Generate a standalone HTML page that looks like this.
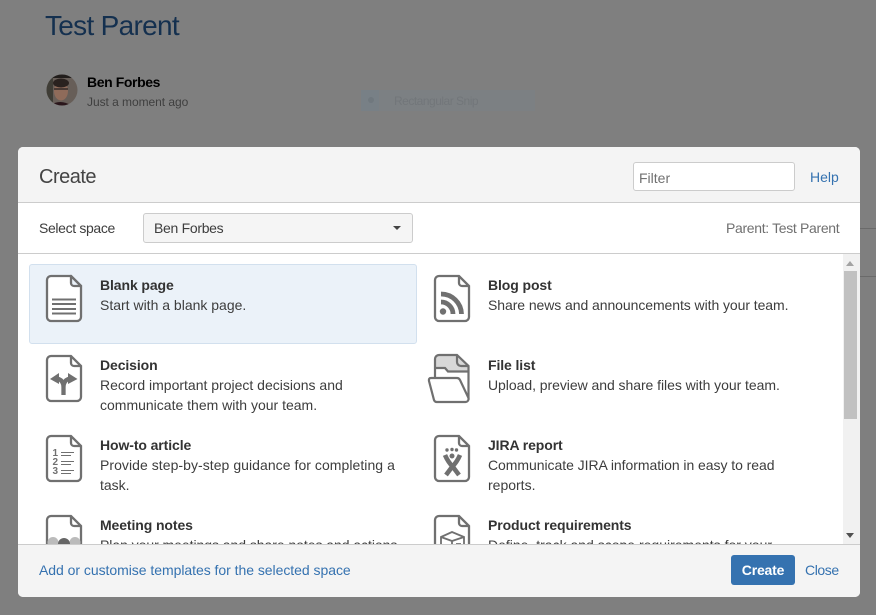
<!DOCTYPE html>
<html><head><meta charset="utf-8">
<style>
html,body{margin:0;padding:0;width:876px;height:615px;overflow:hidden;background:#7f7f7f;font-family:"Liberation Sans",sans-serif;}
div,span,a{position:absolute;white-space:nowrap;}
.t{font-size:14px;line-height:20px;color:#3d3d3d;}
.b{font-weight:bold;font-size:14px;line-height:20px;color:#333;letter-spacing:-0.1px;}
.l{color:#3572b0;font-size:14px;line-height:20px;}
svg{position:absolute;overflow:visible;}
</style></head><body>
<div style="left:45px;top:8px;font-size:28px;line-height:36px;color:#14304f;letter-spacing:-0.7px;">Test Parent</div>
<svg style="left:46px;top:74px" width="32" height="32" viewBox="0 0 32 32"><defs><clipPath id="c"><circle cx="16" cy="16" r="15.500"/></clipPath></defs><g clip-path="url(#c)"><rect width="32" height="32" fill="#675e58"/><rect width="32" height="4" fill="#221e1c"/><path d="M0 0H7V32H0Z" fill="#3f3d36"/><ellipse cx="15" cy="17" rx="7" ry="9.500" fill="#8f6b5a"/><ellipse cx="15" cy="9" rx="8" ry="4.500" fill="#2a221f"/><path d="M8 14H22V16H8Z" fill="#4a3a34"/><path d="M3 32Q14 24 26 32Z" fill="#2a161b"/></g></svg>
<div style="left:87px;top:72px;font-size:14px;line-height:20px;font-weight:bold;color:#000;letter-spacing:-0.4px;">Ben Forbes</div>
<div style="left:87px;top:92px;font-size:12px;line-height:20px;color:#3f3f3f;letter-spacing:-0.05px;">Just a moment ago</div>
<div style="left:361px;top:90px;width:174px;height:21px;background:#7c8083;"></div>
<div style="left:361px;top:90px;width:18px;height:21px;background:#788086;"></div>
<div style="left:368px;top:97px;width:6px;height:6px;border-radius:3px;background:#70787e;"></div>
<div style="left:394px;top:91px;font-size:12px;line-height:20px;color:#72767a;letter-spacing:-0.5px;">Rectangular Snip</div>
<div style="left:860px;top:228px;width:16px;height:1px;background:#6a6a6a;"></div>
<div style="left:860px;top:276px;width:16px;height:1px;background:#6a6a6a;"></div>

<div style="left:18px;top:147px;width:842px;height:450px;background:#fff;border-radius:5px;overflow:hidden;">
  <div style="left:0;top:0;width:842px;height:55px;background:#f4f4f4;border-bottom:1px solid #ccc;"></div>
  <div style="left:21px;top:16px;font-size:20px;line-height:28px;color:#444;letter-spacing:-0.5px;">Create</div>
  <div style="left:615px;top:15px;width:160px;height:27px;background:#fff;border:1px solid #ccc;border-radius:3px;"></div>
  <div style="left:621px;top:21px;font-size:14px;line-height:20px;color:#707070;">Filter</div>
  <div class="l" style="left:792px;top:20px;">Help</div>
  <div class="t" style="left:21px;top:71px;letter-spacing:-0.35px;">Select space</div>
  <div style="left:125px;top:66px;width:268px;height:28px;background:#f5f5f5;border:1px solid #ccc;border-radius:3px;"></div>
  <div class="t" style="left:136px;top:71px;letter-spacing:-0.3px;">Ben Forbes</div>
  <svg style="left:375px;top:79px" width="9" height="5"><path d="M0 0H8L4 4Z" fill="#444"/></svg>
  <div style="left:708px;top:71px;font-size:14px;line-height:20px;color:#707070;letter-spacing:-0.33px;">Parent: Test Parent</div>
  <div style="left:0;top:106px;width:842px;height:1px;background:#ccc;"></div>

  <div style="left:0;top:107px;width:842px;height:290px;overflow:hidden;">
    <div style="left:11px;top:10px;width:386px;height:78px;background:#ebf2f9;border:1px solid #d2e0ee;border-radius:3px;"></div>

    <div class="b" style="left:82px;top:21px;">Blank page</div>
    <div class="t" style="left:82px;top:41px;">Start with a blank page.</div>
    <div class="b" style="left:470px;top:21px;">Blog post</div>
    <div class="t" style="left:470px;top:41px;letter-spacing:-0.07px;">Share news and announcements with your team.</div>
    <div class="b" style="left:82px;top:101px;">Decision</div>
    <div class="t" style="left:82px;top:121px;">Record important project decisions and</div>
    <div class="t" style="left:82px;top:141px;">communicate them with your team.</div>
    <div class="b" style="left:470px;top:101px;">File list</div>
    <div class="t" style="left:470px;top:121px;letter-spacing:-0.05px;">Upload, preview and share files with your team.</div>
    <div class="b" style="left:82px;top:181px;">How-to article</div>
    <div class="t" style="left:82px;top:201px;letter-spacing:0.05px;">Provide step-by-step guidance for completing a</div>
    <div class="t" style="left:82px;top:221px;">task.</div>
    <div class="b" style="left:470px;top:181px;">JIRA report</div>
    <div class="t" style="left:470px;top:201px;letter-spacing:-0.05px;">Communicate JIRA information in easy to read</div>
    <div class="t" style="left:470px;top:221px;">reports.</div>
    <div class="b" style="left:82px;top:261px;">Meeting notes</div>
    <div class="t" style="left:82px;top:281px;letter-spacing:-0.05px;">Plan your meetings and share notes and actions</div>
    <div class="b" style="left:470px;top:261px;">Product requirements</div>
    <div class="t" style="left:470px;top:281px;">Define, track and scope requirements for your</div>

    <!-- blank -->
    <svg style="left:28px;top:20px" width="36" height="50" viewBox="0 0 36 50"><path d="M5 2H25L35 12V43A4 4 0 0 1 31 47H5A4 4 0 0 1 1 43V6A4 4 0 0 1 5 2Z" fill="#fff" stroke="#707070" stroke-width="2.300"/><path d="M25 2V9A3 3 0 0 0 28 12H35Z" fill="#ebf2f9" stroke="#707070" stroke-width="2.300" stroke-linejoin="round"/><path d="M6 25.500H30M6 30H30M6 35H30M6 39.500H30" stroke="#707070" stroke-width="2"/></svg>
    <!-- decision -->
    <svg style="left:28px;top:100px" width="36" height="50" viewBox="0 0 36 50"><path d="M5 2H25L35 12V43A4 4 0 0 1 31 47H5A4 4 0 0 1 1 43V6A4 4 0 0 1 5 2ZM25 2V9A3 3 0 0 0 28 12H35" fill="#fff" stroke="#707070" stroke-width="2.300"/><path d="M17.500 41V33Q17.500 26 11 24.500M17.500 41V33Q17.500 26 24 24.500" fill="none" stroke="#707070" stroke-width="4.300"/><path d="M4 25L13 19V30ZM31.500 25L22 19V30Z" fill="#707070"/></svg>
    <!-- howto -->
    <svg style="left:28px;top:180px" width="36" height="50" viewBox="0 0 36 50"><path d="M5 2H25L35 12V43A4 4 0 0 1 31 47H5A4 4 0 0 1 1 43V6A4 4 0 0 1 5 2ZM25 2V9A3 3 0 0 0 28 12H35" fill="#fff" stroke="#707070" stroke-width="2.300"/><text x="6.500" y="22" font-size="10" font-weight="bold" fill="#707070" font-family="Liberation Sans">1</text><text x="6.500" y="31" font-size="10" font-weight="bold" fill="#707070" font-family="Liberation Sans">2</text><text x="6.500" y="40" font-size="10" font-weight="bold" fill="#707070" font-family="Liberation Sans">3</text><path d="M15 18.500H28M15 21.500H25M15 27.500H28M15 30.500H25M15 36.500H28M15 39.500H25" stroke="#707070" stroke-width="1.100"/></svg>
    <!-- meeting -->
    <svg style="left:28px;top:260px" width="36" height="50" viewBox="0 0 36 50"><path d="M5 2H25L35 12V43A4 4 0 0 1 31 47H5A4 4 0 0 1 1 43V6A4 4 0 0 1 5 2ZM25 2V9A3 3 0 0 0 28 12H35" fill="#fff" stroke="#707070" stroke-width="2.300"/><circle cx="7" cy="28.500" r="5.500" fill="#bbb"/><circle cx="29" cy="28.500" r="5.500" fill="#bbb"/><circle cx="18" cy="30" r="6" fill="#666"/></svg>
    <!-- blog -->
    <svg style="left:416px;top:20px" width="36" height="50" viewBox="0 0 36 50"><path d="M5 2H25L35 12V43A4 4 0 0 1 31 47H5A4 4 0 0 1 1 43V6A4 4 0 0 1 5 2ZM25 2V9A3 3 0 0 0 28 12H35" fill="#fff" stroke="#707070" stroke-width="2.300"/><circle cx="9" cy="37.500" r="3.200" fill="#707070"/><path d="M7 28A12 12 0 0 1 19 40M7 20A20.500 20.500 0 0 1 27.500 40" fill="none" stroke="#707070" stroke-width="4.800"/></svg>
    <!-- file list -->
    <svg style="left:410px;top:100px" width="44" height="50" viewBox="0 0 44 50"><path d="M7 14V5A4 4 0 0 1 11 1H29L40.500 12V18H20L17 14Z" fill="#d8d8d8"/><path d="M7 24V5A4 4 0 0 1 11 1H29L40.500 12V46M29 1V8A4 4 0 0 0 33 12H40.500" fill="none" stroke="#707070" stroke-width="2.200"/><path d="M7 14H17L20 17.500H40.500" fill="none" stroke="#707070" stroke-width="2.200"/><path d="M3 24H29Q31 24 32 26L40.500 44V45A3 3 0 0 1 37.500 48H9A3 3 0 0 1 6 46L1 27Q0.500 24 3 24Z" fill="#fff" stroke="#707070" stroke-width="2.200"/></svg>
    <!-- jira -->
    <svg style="left:416px;top:180px" width="36" height="50" viewBox="0 0 36 50"><path d="M5 2H25L35 12V43A4 4 0 0 1 31 47H5A4 4 0 0 1 1 43V6A4 4 0 0 1 5 2ZM25 2V9A3 3 0 0 0 28 12H35" fill="#fff" stroke="#707070" stroke-width="2.300"/><g fill="#707070"><circle cx="13" cy="16" r="1.700"/><circle cx="18" cy="15.500" r="1.700"/><circle cx="22.500" cy="16" r="1.700"/><circle cx="18" cy="22" r="2.500"/></g><path d="M11 21Q14 28 19 33L25 41M26 21Q23 28 18 33L12 41" stroke="#707070" stroke-width="4.600" fill="none"/></svg>
    <!-- product -->
    <svg style="left:416px;top:260px" width="36" height="50" viewBox="0 0 36 50"><path d="M5 2H25L35 12V43A4 4 0 0 1 31 47H5A4 4 0 0 1 1 43V6A4 4 0 0 1 5 2ZM25 2V9A3 3 0 0 0 28 12H35" fill="#fff" stroke="#707070" stroke-width="2.300"/><path d="M7 23L18 18L30 23V34H7ZM7 23L18 27L30 23M18 27V36M22 30H27" fill="none" stroke="#707070" stroke-width="1.800"/></svg>

    <!-- scrollbar -->
    <div style="left:825px;top:0;width:17px;height:290px;background:#f1f1f1;"></div>
    <svg style="left:828px;top:7px" width="9" height="5"><path d="M0 5H8L4 0Z" fill="#a3a3a3"/></svg>
    <div style="left:826px;top:17px;width:13px;height:148px;background:#c1c1c1;"></div>
    <svg style="left:828px;top:279px" width="9" height="5"><path d="M0 0H8L4 5Z" fill="#505050"/></svg>
  </div>

  <div style="left:0;top:397px;width:842px;height:53px;background:#f4f4f4;border-top:1px solid #ccc;box-sizing:border-box;"></div>
  <div class="l" style="left:21px;top:413px;letter-spacing:-0.04px;">Add or customise templates for the selected space</div>
  <div style="left:713px;top:408px;width:64px;height:30px;background:#3572b0;border-radius:3px;color:#fff;font-size:14px;font-weight:bold;line-height:30px;text-align:center;letter-spacing:-0.2px;">Create</div>
  <div class="l" style="left:787px;top:413px;letter-spacing:-0.4px;">Close</div>
</div>
</body></html>
